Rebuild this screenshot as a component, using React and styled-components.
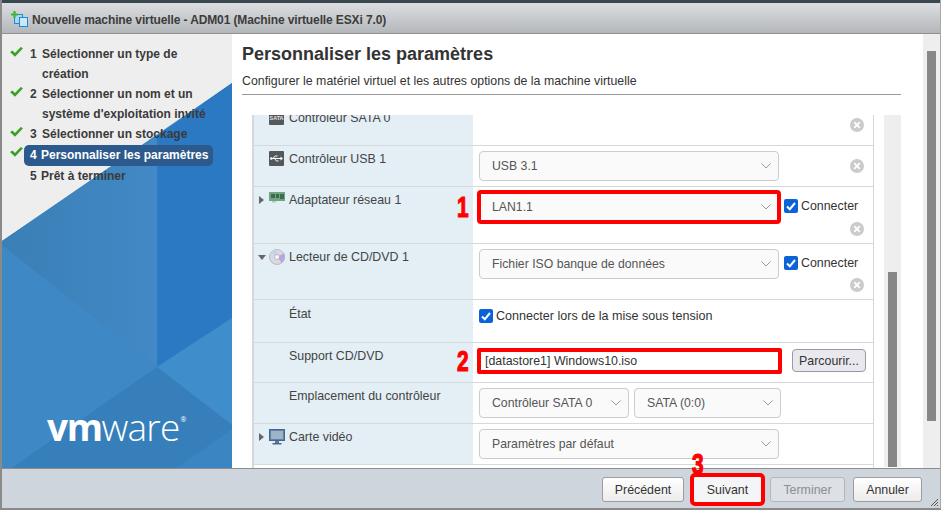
import React from 'react';
import styled, { createGlobalStyle } from 'styled-components';

const GlobalStyle = createGlobalStyle`
  html, body { margin: 0; padding: 0; background: #fff; }
  body { font-family: "Liberation Sans", Arial, sans-serif; color: #333; }
`;

const Window = styled.div`
  width: 941px;
  height: 510px;
  display: flex;
  flex-direction: column;
  overflow: hidden;
  box-sizing: border-box;
  border-left: 2px solid #8a8a8a;
  border-right: 1px solid #a8a8a8;
  border-bottom: 2px solid #8a8a8a;
`;

const TitleBar = styled.header`
  height: 34px;
  flex: none;
  box-sizing: border-box;
  display: flex;
  align-items: center;
  gap: 4px;
  padding: 3px 0 0 11px;
  margin: 0 -1px 0 -2px;
  background: linear-gradient(#dcdee1, #b4b7ba);
  border-top: 3px solid #39474f;
  border-bottom: 1px solid #8f9091;
  font-size: 12px;
  font-weight: 700;
  color: #3c3c3c;
  letter-spacing: -0.12px;
`;

const Body = styled.div`
  flex: 1;
  min-height: 0;
  display: flex;
`;

const Sidebar = styled.nav`
  position: relative;
  width: 230px;
  flex: none;
  box-sizing: border-box;
  padding: 10px 0 0 8px;
  background: #eeeeee;
  overflow: hidden;
`;

const SidebarArt = styled.svg`
  position: absolute;
  left: 0;
  top: 0;
`;

const StepList = styled.ol`
  position: relative;
  list-style: none;
  margin: 0;
  padding: 0;
`;

const Step = styled.li`
  display: flex;
  align-items: flex-start;
  min-height: 20px;
`;

const CheckSlot = styled.span`
  width: 14px;
  height: 20px;
  flex: none;
  display: flex;
  align-items: center;
  margin-top: -2px;
`;

const StepLabel = styled.div`
  display: flex;
  box-sizing: border-box;
  width: ${p => (p.$active ? '189px' : '182px')};
  height: ${p => (p.$active ? '21px' : 'auto')};
  margin: ${p => (p.$active ? '1px 0 0 0' : '0')};
  padding: 0 0 0 6px;
  border-radius: 5px;
  font-size: 12px;
  font-weight: 700;
  line-height: ${p => (p.$active ? '21px' : '20px')};
  color: ${p => (p.$active ? '#fff' : '#3a3a3a')};
  background: ${p => (p.$active ? '#2c5a8c' : 'transparent')};
`;

const StepNumber = styled.span`
  width: ${p => (p.$active ? '11px' : '12px')};
  flex: none;
`;

const BrandMark = styled.div`
  position: absolute;
  left: 45px;
  top: 373px;
  color: #fff;
  font-family: "Open Sans", sans-serif;
  font-size: 37px;
  line-height: 40px;
  display: flex;
  align-items: baseline;
  b { font-weight: 700; letter-spacing: -1.4px; }
  span { font-weight: 300; letter-spacing: -0.8px; }
  sup { font-size: 7px; line-height: 1; align-self: flex-start; margin: 9px 0 0 1px; font-weight: 400; }
`;

const Main = styled.main`
  flex: 1;
  min-width: 0;
  display: flex;
  background: #fff;
`;

const Content = styled.section`
  flex: 1;
  min-width: 0;
  display: flex;
  flex-direction: column;
  padding-left: 10px;
`;

const Heading = styled.h1`
  margin: 0;
  padding-top: 9px;
  font-size: 18px;
  line-height: 22px;
  font-weight: 700;
  color: #333;
`;

const Subheading = styled.p`
  margin: 0;
  padding-top: 7px;
  box-sizing: border-box;
  font-size: 12.35px;
  line-height: 18px;
  color: #333;
  width: 659px;
  height: 30px;
  border-bottom: 1px solid #999;
`;

const Scroller = styled.div`
  flex: 1;
  min-height: 0;
  display: flex;
  gap: 10px;
  padding: 20px 22px 0 10px;
`;

const Table = styled.div`
  width: 622px;
  flex: none;
  overflow: hidden;
  box-sizing: border-box;
  border-left: 2px solid #d4d8da;
  border-right: 1px solid #d4d8da;
`;

const Rows = styled.div`
  margin-top: -10px;
`;

const Row = styled.div`
  display: grid;
  grid-template-columns: 219px 1fr;
  height: ${p => p.$h}px;
  box-sizing: border-box;
  border-bottom: 1px solid #d6d9db;
`;

const LabelCell = styled.div`
  background: #e3eef5;
  display: flex;
  align-items: flex-start;
  padding-top: ${p => p.$top ?? 6}px;
  font-size: 12.4px;
  line-height: 14px;
  color: #444;
`;

const Caret = styled.span`
  width: 15px;
  height: 14px;
  flex: none;
  display: flex;
  align-items: center;
  justify-content: center;
`;

const IconSlot = styled.span`
  width: 16px;
  height: 16px;
  flex: none;
  margin-right: 4px;
  margin-top: -1px;
`;

const LabelText = styled.span`
  margin-left: ${p => (p.$plain ? '35px' : '0')};
`;

const ValueCell = styled.div`
  display: flex;
  align-items: flex-start;
  padding: 5px 0 0 6px;
  gap: ${p => p.$gap ?? 5}px;
  font-size: 12.4px;
  color: #444;
`;

const SelectGap = styled.div`
  width: 300px;
  flex: none;
`;

const Select = styled.div`
  width: ${p => p.$w}px;
  height: 30px;
  box-sizing: border-box;
  flex: none;
  display: flex;
  align-items: center;
  justify-content: space-between;
  padding: 0 7px 0 12px;
  background: #fafafa;
  border: 1px solid #ccc;
  border-radius: 4px;
  font-size: 12.25px;
  color: #555;
  ${p => p.$marked && `
    outline: 4px solid #f00;
    outline-offset: -2px;
    border-radius: 2px;
  `}
`;

const TextField = styled.div`
  width: 305px;
  height: 26px;
  margin-left: -2px;
  box-sizing: border-box;
  display: flex;
  align-items: center;
  padding-left: 4px;
  border: 4px solid #f00;
  border-radius: 2px;
  background: #fff;
  color: #333;
  font-size: 12.4px;
`;

const BrowseButton = styled.button`
  width: 74px;
  height: 23px;
  margin: 1px 0 0 10px;
  padding: 0;
  font: inherit;
  font-size: 12.4px;
  color: #333;
  background: #e8e8ee;
  border: 1px solid #9a9aa2;
  border-radius: 4px;
`;

const SideOptions = styled.div`
  display: flex;
  flex-direction: column;
  align-items: flex-end;
  width: 80px;
`;

const CheckRow = styled.label`
  display: flex;
  align-items: center;
  gap: 3px;
  align-self: flex-start;
  margin-top: ${p => p.$top ?? 2}px;
  font-size: ${p => p.$size ?? 12.4}px;
  line-height: 14px;
  color: #333;
`;

const CheckBox = styled.span`
  width: 14px;
  height: 14px;
  flex: none;
  display: flex;
  align-items: center;
  justify-content: center;
  background: #0b63d8;
  border-radius: 2px;
`;

const RemoveIcon = styled.svg`
  display: block;
  margin-top: ${p => p.$top ?? 8}px;
  flex: none;
`;

const Track = styled.div`
  width: 17px;
  flex: none;
  display: flex;
  align-items: flex-end;
  justify-content: center;
  background: #eeeeee;
  margin-bottom: 1px;
`;

const OuterTrack = styled.div`
  width: 17px;
  flex: none;
  box-sizing: border-box;
  padding: 17px 0 0 4px;
  background: #eeeeee;
`;

const Thumb = styled.div`
  width: 9px;
  height: ${p => p.$h}px;
  background: #878787;
`;

const Footer = styled.footer`
  position: relative;
  height: 40px;
  flex: none;
  box-sizing: border-box;
  display: flex;
  justify-content: flex-end;
  align-items: flex-start;
  gap: 8px;
  padding: 8px 18px 0 0;
  background: #cfd5dd;
  border-top: 1px solid #8e8e8e;
`;

const FooterButton = styled.button`
  width: ${p => p.$w}px;
  height: 25px;
  padding: 0;
  font: inherit;
  font-size: 12.4px;
  color: ${p => (p.disabled ? '#8a8f96' : '#333')};
  background: ${p => (p.disabled ? '#dde0e5' : 'linear-gradient(#fff, #ececec)')};
  border: 1px solid ${p => (p.disabled ? '#b4b8bd' : '#9d9d9d')};
  border-radius: 3px;
  ${p => p.$marked && `
    margin: 0 1px 0 2px;
    outline: 4px solid #f00;
    border-radius: 1px;
    border: none;
    background: #f4f5f6;
  `}
`;

const Grip = styled.svg`
  position: absolute;
  right: 1px;
  bottom: 1px;
`;

const Marker = styled.span`
  position: absolute;
  left: ${p => p.$x}px;
  top: ${p => p.$y}px;
  color: #f00;
  font-size: 29px;
  line-height: 29px;
  font-weight: 700;
  -webkit-text-stroke: 1.2px #f00;
  transform: scaleX(0.72);
  transform-origin: left top;
`;

const Chevron = () => (
  <svg width="10" height="6" viewBox="0 0 10 6" fill="none" stroke="#9a9a9a" strokeWidth="1">
    <path d="M0.5 0.5 L5 5 L9.5 0.5" />
  </svg>
);

const Tick = () => (
  <svg width="13" height="10" viewBox="0 0 13 10">
    <path d="M0 5 L2.5 3.6 L5 6 L10.8 0 L13 1.2 L5 9.8 Z" fill="#3a9f26" />
  </svg>
);

const CheckMark = () => (
  <svg width="10" height="9" viewBox="0 0 10 9" fill="none" stroke="#fff" strokeWidth="2">
    <path d="M1 4.5 L3.8 7.2 L9 1" />
  </svg>
);

const Remove = ({ top }) => (
  <RemoveIcon $top={top} width="14" height="14" viewBox="0 0 14 14">
    <circle cx="7" cy="7" r="7" fill="#cbcbcb" />
    <path d="M4.2 4.2 L9.8 9.8 M9.8 4.2 L4.2 9.8" stroke="#fff" strokeWidth="1.8" />
  </RemoveIcon>
);

const CaretRight = () => (
  <svg width="5" height="8" viewBox="0 0 5 8"><path d="M0 0 L5 4 L0 8 Z" fill="#666" /></svg>
);

const CaretDown = () => (
  <svg width="8" height="5" viewBox="0 0 8 5"><path d="M0 0 L8 0 L4 5 Z" fill="#666" /></svg>
);

const SataIcon = () => (
  <svg width="16" height="16" viewBox="0 0 16 16">
    <rect y="0" width="15" height="15" rx="1" fill="#55585a" />
    <text x="7.5" y="10" textAnchor="middle" fontSize="5.4" fontWeight="700" fill="#e4e4e4" fontFamily="Liberation Sans, sans-serif">SATA</text>
  </svg>
);

const UsbIcon = () => (
  <svg width="16" height="16" viewBox="0 0 16 16">
    <rect y="0" width="15" height="15" rx="1" fill="#55585a" />
    <path d="M1.5 7.5 H12 M4 7.5 L6.2 5 H8.5 M5.5 7.5 L7.5 10 H9.5" stroke="#fff" strokeWidth="1" fill="none" />
    <circle cx="2.3" cy="7.5" r="1.2" fill="#fff" />
    <path d="M11.5 5.5 L14 7.5 L11.5 9.5 Z" fill="#fff" />
  </svg>
);

const NicIcon = () => (
  <svg width="16" height="16" viewBox="0 0 16 16">
    <rect y="0" width="16" height="9" fill="#6fa583" />
    <rect x="2" y="2" width="4" height="4" fill="#3f6a4e" />
    <rect x="7" y="2" width="3" height="4" fill="#3f6a4e" />
    <rect x="11" y="2" width="4" height="5" fill="#3f6a4e" />
    <rect x="3" y="9" width="4" height="1.5" fill="#b8c8bc" />
  </svg>
);

const DiscIcon = () => (
  <svg width="16" height="16" viewBox="0 0 16 16">
    <circle cx="8" cy="8" r="7.5" fill="#d9d9e4" stroke="#a9a9b5" strokeWidth="0.7" />
    <path d="M8 8 L15 4 A8 8 0 0 1 13 14 Z" fill="#b7a8dc" />
    <path d="M8 8 L2 3 A8 8 0 0 1 8 0.5 Z" fill="#c5d3ea" />
    <circle cx="8" cy="8" r="2.5" fill="#f6f6fa" stroke="#9a9aa8" strokeWidth="0.6" />
  </svg>
);

const MonitorIcon = () => (
  <svg width="16" height="16" viewBox="0 0 16 16">
    <rect x="0.5" y="0.5" width="15" height="11" fill="#5e82a8" stroke="#47688c" />
    <rect x="2" y="2" width="12" height="8" fill="#9fb3c8" />
    <rect x="6" y="12" width="4" height="2" fill="#5e7690" />
    <rect x="3.5" y="14" width="9" height="1.5" fill="#47688c" />
  </svg>
);

const VmIcon = () => (
  <svg width="17" height="17" viewBox="0 0 17 17">
    <rect x="3.5" y="3.5" width="8" height="9" fill="#a9d8f5" stroke="#1f8ad0" />
    <rect x="8.5" y="6.5" width="8" height="9" fill="#c9e8fa" stroke="#1f8ad0" />
    <path d="M3.5 0 V7 M0 3.5 H7" stroke="#3fb53a" strokeWidth="2.2" />
  </svg>
);

const SideArt = () => (
  <SidebarArt width="230" height="434" viewBox="0 0 230 434">
    <defs>
      <linearGradient id="band" x1="0" x2="1" y1="0" y2="0">
        <stop offset="0" stopColor="#3a7fb5" />
        <stop offset="1" stopColor="#4289c6" />
      </linearGradient>
    </defs>
    <polygon points="0,207 230,49 230,434 0,434" fill="#3a85c2" />
    <polygon points="155,102 230,49 230,284 155,333" fill="#2b79c3" />
    <polygon points="0,207 155,102 155,333 0,211" fill="url(#band)" />
    <polygon points="0,211 155,333 10,434 0,434" fill="#3d88c5" />
    <polygon points="155,333 230,284 230,391" fill="#408dcc" />
    <polygon points="155,333 230,391 230,395 175,434 10,434" fill="#377fba" />
  </SidebarArt>
);

const steps = [
  { n: 1, text: 'Sélectionner un type de création' },
  { n: 2, text: "Sélectionner un nom et un système d'exploitation invité" },
  { n: 3, text: 'Sélectionner un stockage' },
  { n: 4, text: 'Personnaliser les paramètres', active: true },
  { n: 5, text: 'Prêt à terminer', pending: true },
];

const App = () => (
  <Window>
    <GlobalStyle />
    <TitleBar>
      <VmIcon />
      Nouvelle machine virtuelle - ADM01 (Machine virtuelle ESXi 7.0)
    </TitleBar>
    <Body>
      <Sidebar>
        <SideArt />
        <StepList>
          {steps.map(s => (
            <Step key={s.n}>
              <CheckSlot>{!s.pending && <Tick />}</CheckSlot>
              <StepLabel $active={s.active}>
                <StepNumber $active={s.active || s.pending}>{s.n}</StepNumber>
                <span>{s.text}</span>
              </StepLabel>
            </Step>
          ))}
        </StepList>
        <BrandMark><b>vm</b><span>ware</span><sup>®</sup></BrandMark>
      </Sidebar>
      <Main>
        <Content>
          <Heading>Personnaliser les paramètres</Heading>
          <Subheading>Configurer le matériel virtuel et les autres options de la machine virtuelle</Subheading>
          <Scroller>
            <Table>
              <Rows>
                <Row $h={41}>
                  <LabelCell>
                    <Caret />
                    <IconSlot><SataIcon /></IconSlot>
                    <LabelText>Contrôleur SATA 0</LabelText>
                  </LabelCell>
                  <ValueCell>
                    <SelectGap />
                    <SideOptions><Remove /></SideOptions>
                  </ValueCell>
                </Row>
                <Row $h={41}>
                  <LabelCell>
                    <Caret />
                    <IconSlot><UsbIcon /></IconSlot>
                    <LabelText>Contrôleur USB 1</LabelText>
                  </LabelCell>
                  <ValueCell>
                    <Select $w={300}>USB 3.1<Chevron /></Select>
                    <SideOptions><Remove /></SideOptions>
                  </ValueCell>
                </Row>
                <Row $h={57}>
                  <LabelCell>
                    <Caret><CaretRight /></Caret>
                    <IconSlot><NicIcon /></IconSlot>
                    <LabelText>Adaptateur réseau 1</LabelText>
                  </LabelCell>
                  <ValueCell>
                    <Select $w={300} $marked>LAN1.1<Chevron /></Select>
                    <SideOptions>
                      <CheckRow $top={7}><CheckBox><CheckMark /></CheckBox>Connecter</CheckRow>
                      <Remove top={9} />
                    </SideOptions>
                  </ValueCell>
                </Row>
                <Row $h={56}>
                  <LabelCell>
                    <Caret><CaretDown /></Caret>
                    <IconSlot><DiscIcon /></IconSlot>
                    <LabelText>Lecteur de CD/DVD 1</LabelText>
                  </LabelCell>
                  <ValueCell>
                    <Select $w={300}>Fichier ISO banque de données<Chevron /></Select>
                    <SideOptions>
                      <CheckRow $top={7}><CheckBox><CheckMark /></CheckBox>Connecter</CheckRow>
                      <Remove top={8} />
                    </SideOptions>
                  </ValueCell>
                </Row>
                <Row $h={43}>
                  <LabelCell $top={7}><LabelText $plain>État</LabelText></LabelCell>
                  <ValueCell>
                    <CheckRow $top={4} $size={12.57}><CheckBox><CheckMark /></CheckBox>Connecter lors de la mise sous tension</CheckRow>
                  </ValueCell>
                </Row>
                <Row $h={40}>
                  <LabelCell><LabelText $plain>Support CD/DVD</LabelText></LabelCell>
                  <ValueCell $gap={0}>
                    <TextField>[datastore1] Windows10.iso</TextField>
                    <BrowseButton>Parcourir...</BrowseButton>
                  </ValueCell>
                </Row>
                <Row $h={41}>
                  <LabelCell><LabelText $plain>Emplacement du contrôleur</LabelText></LabelCell>
                  <ValueCell>
                    <Select $w={150}>Contrôleur SATA 0<Chevron /></Select>
                    <Select $w={147}>SATA (0:0)<Chevron /></Select>
                  </ValueCell>
                </Row>
                <Row $h={41}>
                  <LabelCell>
                    <Caret><CaretRight /></Caret>
                    <IconSlot><MonitorIcon /></IconSlot>
                    <LabelText>Carte vidéo</LabelText>
                  </LabelCell>
                  <ValueCell>
                    <Select $w={300}>Paramètres par défaut<Chevron /></Select>
                  </ValueCell>
                </Row>
              </Rows>
            </Table>
            <Track><Thumb $h={195} /></Track>
          </Scroller>
        </Content>
        <OuterTrack><Thumb $h={370} /></OuterTrack>
      </Main>
    </Body>
    <Footer>
      <FooterButton $w={82}>Précédent</FooterButton>
      <FooterButton $w={67} $marked>Suivant</FooterButton>
      <FooterButton $w={75} disabled>Terminer</FooterButton>
      <FooterButton $w={69}>Annuler</FooterButton>
      <Grip width="9" height="9" viewBox="0 0 9 9">
        <path d="M8 1 L1 8 M8 4 L4 8 M8 7 L7 8" stroke="#555" strokeWidth="1" />
      </Grip>
    </Footer>
    <Marker $x={457} $y={193}>1</Marker>
    <Marker $x={457} $y={347}>2</Marker>
    <Marker $x={692} $y={450}>3</Marker>
  </Window>
);

export default App;
